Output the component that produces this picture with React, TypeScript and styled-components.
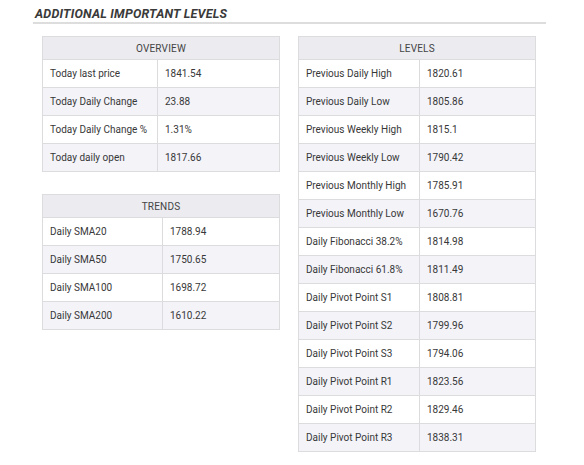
import React from "react";
import styled, { createGlobalStyle } from "styled-components";

const Global = createGlobalStyle`
  html, body { margin: 0; padding: 0; background: #ffffff; }
  body { font-family: Roboto, "Liberation Sans", Arial, sans-serif; color: #333; }
`;

const Page = styled.div`
  width: 584px;
  height: 465px;
  padding: 7px 0 0 33px;
  box-sizing: border-box;
`;

const Title = styled.h2`
  margin: 0;
  width: 513px;
  padding: 0 0 1px 2px;
  box-sizing: border-box;
  border-bottom: 2px solid #dddddd;
  font-size: 12.5px;
  line-height: 14px;
  font-weight: 700;
  font-style: italic;
  letter-spacing: 0.2px;
  color: #3a3a3a;
  text-transform: uppercase;
`;

const Columns = styled.div`
  display: flex;
  gap: 18px;
  margin: 12px 0 0 9px;
  align-items: flex-start;
`;

const Stack = styled.div`
  display: flex;
  flex-direction: column;
  gap: 22px;
`;

const Table = styled.table`
  width: 238px;
  border-collapse: collapse;
  table-layout: fixed;
  font-size: 10px;
`;

const HeadCell = styled.th`
  height: 22px;
  padding: 0;
  background: #ebebf0;
  border: 1px solid #dcdcdf;
  font-weight: 400;
  color: #444;
  letter-spacing: 0.2px;
  text-align: center;
  vertical-align: middle;
`;

const Row = styled.tr<{ $alt: boolean }>`
  background: ${(p) => (p.$alt ? "#f3f3f8" : "#ffffff")};
`;

const Cell = styled.td`
  height: 27px;
  padding: 0 0 0 7px;
  border: 1px solid #dcdcdf;
  border-top: none;
  color: #383838;
  letter-spacing: 0;
  white-space: nowrap;
  vertical-align: middle;
`;

type Item = [string, string];

function DataTable({ title, rows, split }: { title: string; rows: Item[]; split: number }) {
  return (
    <Table>
      <colgroup>
        <col style={{ width: split }} />
        <col />
      </colgroup>
      <thead>
        <tr>
          <HeadCell colSpan={2}>{title}</HeadCell>
        </tr>
      </thead>
      <tbody>
        {rows.map(([k, v], i) => (
          <Row key={k} $alt={i % 2 === 1}>
            <Cell>{k}</Cell>
            <Cell>{v}</Cell>
          </Row>
        ))}
      </tbody>
    </Table>
  );
}

const overview: Item[] = [
  ["Today last price", "1841.54"],
  ["Today Daily Change", "23.88"],
  ["Today Daily Change %", "1.31%"],
  ["Today daily open", "1817.66"],
];

const trends: Item[] = [
  ["Daily SMA20", "1788.94"],
  ["Daily SMA50", "1750.65"],
  ["Daily SMA100", "1698.72"],
  ["Daily SMA200", "1610.22"],
];

const levels: Item[] = [
  ["Previous Daily High", "1820.61"],
  ["Previous Daily Low", "1805.86"],
  ["Previous Weekly High", "1815.1"],
  ["Previous Weekly Low", "1790.42"],
  ["Previous Monthly High", "1785.91"],
  ["Previous Monthly Low", "1670.76"],
  ["Daily Fibonacci 38.2%", "1814.98"],
  ["Daily Fibonacci 61.8%", "1811.49"],
  ["Daily Pivot Point S1", "1808.81"],
  ["Daily Pivot Point S2", "1799.96"],
  ["Daily Pivot Point S3", "1794.06"],
  ["Daily Pivot Point R1", "1823.56"],
  ["Daily Pivot Point R2", "1829.46"],
  ["Daily Pivot Point R3", "1838.31"],
];

export default function App() {
  return (
    <>
      <Global />
      <Page>
        <Title>Additional Important Levels</Title>
        <Columns>
          <Stack>
            <DataTable title="OVERVIEW" rows={overview} split={115} />
            <DataTable title="TRENDS" rows={trends} split={120} />
          </Stack>
          <DataTable title="LEVELS" rows={levels} split={121} />
        </Columns>
      </Page>
    </>
  );
}
